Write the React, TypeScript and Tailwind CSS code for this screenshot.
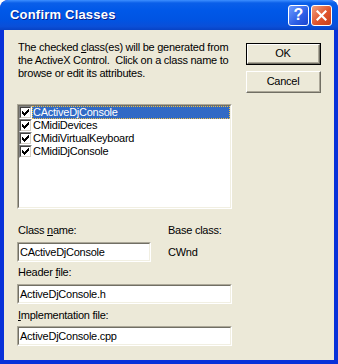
import React from "react";

const font = { fontFamily: '"Liberation Sans", Arial, sans-serif' };

const classes = ["CActiveDjConsole", "CMidiDevices", "CMidiVirtualKeyboard", "CMidiDjConsole"];

const CheckBox = () => (
  <span className="w-[13px] h-[13px] shrink-0 bg-white border-t border-l border-t-[#808080] border-l-[#808080] border-b border-r border-b-white border-r-white flex">
    <span className="flex-1 border-t border-l border-t-[#404040] border-l-[#404040] border-b border-r border-b-[#d4d0c8] border-r-[#d4d0c8] flex items-center justify-center">
      <svg width="7" height="7" viewBox="0 0 7 7" shapeRendering="crispEdges">
        <path d="M0 2h1v3h-1zM1 3h1v3h-1zM2 4h1v3h-1zM3 3h1v3h-1zM4 2h1v3h-1zM5 1h1v3h-1zM6 0h1v3h-1z" fill="#000" />
      </svg>
    </span>
  </span>
);

const Edit = ({ value, w }: { value: string; w: string }) => (
  <div className={`${w} h-[20px] bg-white border-t border-l border-t-[#aca899] border-l-[#aca899] border-b border-r border-b-white border-r-white flex`}>
    <div className="flex-1 border-t border-l border-t-[#716f64] border-l-[#716f64] border-b border-r border-b-[#f1efe2] border-r-[#f1efe2] flex items-center pl-[1px] text-[11px] text-black">
      {value}
    </div>
  </div>
);

const Btn = ({ label, def }: { label: string; def?: boolean }) => (
  <div className={`w-[75px] h-[22px] flex ${def ? "border border-black" : ""}`}>
    <div className="flex-1 bg-[#ece9d8] border-t border-l border-t-white border-l-white border-b border-r border-b-[#716f64] border-r-[#716f64] flex">
      <div className="flex-1 border-b border-r border-b-[#aca899] border-r-[#aca899] flex items-center justify-center text-[11px] text-black">
        {label}
      </div>
    </div>
  </div>
);

export default function App() {
  return (
    <div className="w-[338px] h-[364px] bg-[#0831d9] rounded-t-[8px] flex flex-col overflow-hidden" style={font}>
      <div className="h-[30px] shrink-0 rounded-t-[8px] bg-[linear-gradient(to_bottom,#3d8fff_0%,#0a5fe9_10%,#0058e8_35%,#0054e3_65%,#0a4fd8_88%,#0842c4_100%)] flex items-center pl-[10px] pr-[6px]">
        <span className="text-white font-bold text-[13px] tracking-[0.2px] [text-shadow:1px_1px_0_#0a1e8c] flex-1">
          Confirm Classes
        </span>
        <div className="flex gap-[2px]">
          <div className="w-[21px] h-[21px] rounded-[3px] border border-white bg-[linear-gradient(135deg,#6f9cff,#2d5fe6_60%,#1c45d0)] flex items-center justify-center text-white font-bold text-[16px] leading-none">
            ?
          </div>
          <div className="w-[21px] h-[21px] rounded-[3px] border border-white bg-[linear-gradient(135deg,#f0a080,#e0542c_55%,#c8401c)] flex items-center justify-center">
            <svg width="11" height="11" viewBox="0 0 11 11">
              <path d="M1.5 1.5l8 8M9.5 1.5l-8 8" stroke="#fff" strokeWidth="2.2" strokeLinecap="square" />
            </svg>
          </div>
        </div>
      </div>
      <div className="flex-1 mx-[4px] mb-[4px] bg-[#ece9d8] flex flex-col pl-[13px] pt-[11px] text-[11px] text-black tracking-[-0.25px]">
        <div className="flex">
          <div className="flex flex-col">
            <p className="pl-[1px] w-[215px] leading-[13px] whitespace-nowrap">
              The checked <span className="underline">c</span>lass(es) will be generated from
              <br />
              the ActiveX Control.&nbsp; Click on a class name to
              <br />
              browse or edit its attributes.
            </p>
            <div className="mt-[24px] w-[215px] h-[105px] bg-white border-t border-l border-t-[#aca899] border-l-[#aca899] border-b border-r border-b-white border-r-white flex">
              <div className="flex-1 border-t border-l border-t-[#716f64] border-l-[#716f64] border-b border-r border-b-[#f1efe2] border-r-[#f1efe2] flex flex-col">
                {classes.map((c, i) => (
                  <div key={c} className="h-[13px] flex items-center">
                    <CheckBox />
                    <div
                      className={`flex-1 h-[13px] flex items-center pl-[1px] leading-none ${
                        i === 0 ? "bg-[#316ac5] text-white outline-1 outline-dotted outline-offset-[-1px] outline-[#f0c040]" : ""
                      }`}
                    >
                      {c}
                    </div>
                  </div>
                ))}
              </div>
            </div>
          </div>
          <div className="ml-[14px] mt-[2px] flex flex-col gap-[6px]">
            <Btn label="OK" def />
            <Btn label="Cancel" />
          </div>
        </div>
        <div className="flex mt-[15px]">
          <div className="flex flex-col w-[151px]">
            <span className="pl-[1px] leading-[13px]">
              Class <span className="underline">n</span>ame:
            </span>
            <div className="mt-[5px]">
              <Edit value="CActiveDjConsole" w="w-[134px]" />
            </div>
          </div>
          <div className="flex flex-col">
            <span className="leading-[13px]">Base class:</span>
            <span className="mt-[9px] leading-[13px]">CWnd</span>
          </div>
        </div>
        <span className="pl-[1px] mt-[4px] leading-[13px]">
          Header <span className="underline">f</span>ile:
        </span>
        <div className="mt-[5px]">
          <Edit value="ActiveDjConsole.h" w="w-[215px]" />
        </div>
        <span className="pl-[1px] mt-[5px] leading-[13px]">
          <span className="underline">I</span>mplementation file:
        </span>
        <div className="mt-[4px]">
          <Edit value="ActiveDjConsole.cpp" w="w-[215px]" />
        </div>
      </div>
    </div>
  );
}
